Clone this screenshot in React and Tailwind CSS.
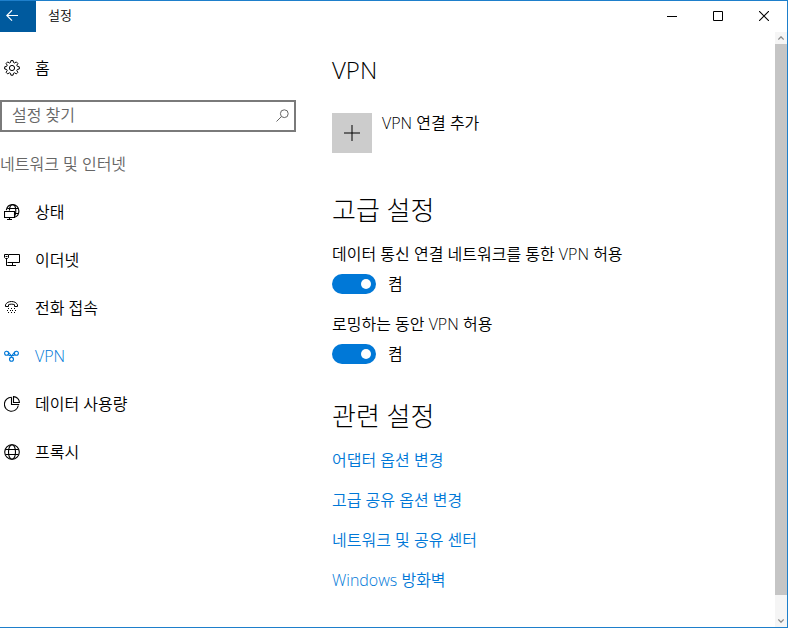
import { useState } from 'react'

function GearIcon() {
  return (
    <svg width="16" height="16" viewBox="0 0 16 16" fill="none" stroke="currentColor" strokeWidth="1" aria-hidden="true">
      <circle cx="8" cy="8" r="2.6" />
      <path d="M6.9 .6h2.2l.4 1.9 1.1.5 1.7-1.1 1.6 1.6-1.1 1.7.5 1.1 2 .5v2.2l-2 .5-.5 1.1 1.1 1.7-1.6 1.6-1.7-1.1-1.1.5-.4 1.9H6.9l-.4-1.9-1.1-.5-1.7 1.1-1.6-1.6 1.1-1.7-.5-1.1-2-.5V6.8l2-.5.5-1.1L2.1 3.5l1.6-1.6 1.7 1.1 1.1-.5z" />
    </svg>
  )
}

function StatusIcon() {
  return (
    <svg width="16" height="16" viewBox="0 0 16 16" fill="none" stroke="currentColor" strokeWidth="1.1" aria-hidden="true">
      <path d="M2.3 6.2C2.9 2.800 5.500.6 8.600.6c3.600 0 6.300 2.900 6.300 6.400 0 3.200-1.800 5.500-4.400 6.300" />
      <path d="M5.400 6.500c.2-3.400 1.400-5.900 3.200-5.900 2 0 3.200 2.900 3.200 6.400 0 2-.4 4-1.300 5.500M3.200 4.500h11M10.500 9.500h4" />
      <path d="M.5 7.500h10v6H.5zM5.500 13.500v2M3 15.500h5" />
    </svg>
  )
}

function EthernetIcon() {
  return (
    <svg width="16" height="16" viewBox="0 0 16 16" fill="none" stroke="currentColor" strokeWidth="1" aria-hidden="true">
      <path d="M5 2.5h10.500v8H3.500M8.500 10.500v3M5 13.500h7M2.500 7v6.500H5" />
      <path d="M.5 2.500h4v3l-1 1h-2l-1-1zM1.500 4.500h2" />
    </svg>
  )
}

function DialUpIcon() {
  return (
    <svg width="16" height="16" viewBox="0 0 16 16" fill="none" stroke="currentColor" strokeWidth="1" aria-hidden="true">
      <path d="M1.500 6.500V4.800C2.500 2.600 4.800 1.500 7.500 1.500s5 1.100 6 3.300v1.700h-3V4.700c-1.600-.7-4.400-.7-6 0v1.800z" />
      <path d="M4 8.500h1M7 8.500h1M10 8.500h1M3 10.500h1M6 10.500h1M8 10.500h1M11 10.500h1M4 12.500h1M7 12.500h1M10 12.500h1" />
    </svg>
  )
}

function VpnIcon() {
  return (
    <svg width="16" height="16" viewBox="0 0 16 16" fill="none" stroke="currentColor" strokeWidth="1.1" aria-hidden="true">
      <circle cx="2.600" cy="5.200" r="2" />
      <circle cx="12.400" cy="5.200" r="2" />
      <circle cx="7.500" cy="11.300" r="2" />
      <path d="M2.600 3.200C5.600 3.200 6.200 8 9.200 10.300M12.400 3.200C9.400 3.200 8.800 8 5.800 10.300" />
      <path d="M4 6.700c.9.900 2 1.100 2.900.8M11 6.700c-.9.900-2 1.100-2.900.8" />
    </svg>
  )
}

function DataUsageIcon() {
  return (
    <svg width="16" height="16" viewBox="0 0 16 16" fill="none" stroke="currentColor" strokeWidth="1.1" aria-hidden="true">
      <path d="M7.500 1.300A7 7 0 1 0 14.300 9.500" />
      <path d="M7.500 1.300v7.200h3.500" />
      <path d="M9.500.600v5.900h5.900C15.400 3.200 12.800.600 9.500.600zM11 8.500h4.200" />
    </svg>
  )
}

function ProxyIcon() {
  return (
    <svg width="16" height="16" viewBox="0 0 16 16" fill="none" stroke="currentColor" strokeWidth="1.1" aria-hidden="true">
      <circle cx="8" cy="8" r="7.300" />
      <ellipse cx="8" cy="8" rx="3.500" ry="7.300" />
      <path d="M1.500 5.500h13M1.500 10.500h13" />
    </svg>
  )
}

const navItems = [
  { id: 'status', label: '상태', icon: StatusIcon },
  { id: 'ethernet', label: '이더넷', icon: EthernetIcon },
  { id: 'dialup', label: '전화 접속', icon: DialUpIcon },
  { id: 'vpn', label: 'VPN', icon: VpnIcon },
  { id: 'data', label: '데이터 사용량', icon: DataUsageIcon },
  { id: 'proxy', label: '프록시', icon: ProxyIcon },
]

const relatedLinks = ['어댑터 옵션 변경', '고급 공유 옵션 변경', '네트워크 및 공유 센터', 'Windows 방화벽']

function TitleBar() {
  return (
    <header className="flex h-[31px] items-start">
      <button type="button" aria-label="뒤로" className="flex h-full w-9 items-center bg-[#005a9e] pb-px pl-1.5 text-white">
        <svg width="12" height="12" viewBox="0 0 12 12" fill="none" stroke="currentColor" strokeWidth="1.2" aria-hidden="true">
          <path d="M12 5.500H.8M6 .3L.8 5.500 6 10.700" />
        </svg>
      </button>
      <span className="flex-1 pt-1 pl-3 text-[13px] leading-5">설정</span>
      <button type="button" aria-label="최소화" className="flex h-[30px] w-[46px] items-center justify-center">
        <svg width="10" height="10" viewBox="0 0 10 10" stroke="currentColor" aria-hidden="true">
          <path d="M0 5.500h10" />
        </svg>
      </button>
      <button type="button" aria-label="최대화" className="flex h-[30px] w-[46px] items-center justify-center">
        <svg width="10" height="10" viewBox="0 0 10 10" fill="none" stroke="currentColor" aria-hidden="true">
          <path d="M.5.5h9v9h-9z" />
        </svg>
      </button>
      <button type="button" aria-label="닫기" className="flex h-[30px] w-[46px] items-center justify-center">
        <svg width="10" height="10" viewBox="0 0 10 10" stroke="currentColor" strokeWidth="1.1" aria-hidden="true">
          <path d="M0 0l10 10M10 0L0 10" />
        </svg>
      </button>
    </header>
  )
}

function NavRow({ label, icon: Icon, active, onClick }) {
  return (
    <button
      type="button"
      onClick={onClick}
      className={`flex h-12 w-full items-center gap-[15px] pl-1 text-left ${active ? 'text-[#0078d7]' : 'text-black'}`}
    >
      <Icon />
      <span>{label}</span>
    </button>
  )
}

function Sidebar({ selected, onSelect }) {
  return (
    <aside className="w-[296px] shrink-0 pt-3">
      <NavRow label="홈" icon={GearIcon} onClick={() => onSelect('vpn')} />
      <div className="mt-2 flex h-8 items-center border-2 border-[#7a7a7a] pr-[5px] pb-0.5 pl-2.5 text-[#666]">
        <input
          type="text"
          aria-label="설정 찾기"
          placeholder="설정 찾기"
          className="min-w-0 flex-1 bg-transparent placeholder:text-[#666] focus:outline-none"
        />
        <svg width="13" height="13" viewBox="0 0 13 13" fill="none" stroke="currentColor" aria-hidden="true">
          <circle cx="8.300" cy="4.700" r="3.900" />
          <path d="M5.500 7.500L.5 12.500" />
        </svg>
      </div>
      <h2 className="mt-2 flex h-12 items-center text-[#666]">네트워크 및 인터넷</h2>
      <nav>
        {navItems.map((item) => (
          <NavRow key={item.id} {...item} active={selected === item.id} onClick={() => onSelect(item.id)} />
        ))}
      </nav>
    </aside>
  )
}

function Toggle({ id, label }) {
  const [on, setOn] = useState(true)

  return (
    <div className="flex flex-col gap-2.5">
      <label htmlFor={id}>{label}</label>
      <div className="flex items-center gap-3">
        <input
          id={id}
          type="checkbox"
          role="switch"
          checked={on}
          onChange={(e) => setOn(e.target.checked)}
          className="flex h-5 w-11 appearance-none items-center rounded-full bg-[#999] px-[5px] before:size-2.5 before:rounded-full before:bg-white checked:justify-end checked:bg-[#0078d7]"
        />
        <span>{on ? '켬' : '끔'}</span>
      </div>
    </div>
  )
}

function ScrollBar() {
  return (
    <div className="flex w-3 shrink-0 flex-col bg-[#f5f5f5] text-[#8a8a8a]" aria-hidden="true">
      <div className="flex h-3 items-center justify-center">
        <svg width="6" height="4" viewBox="0 0 6 4" fill="none" stroke="currentColor" strokeWidth="1.3">
          <path d="M.3 3.500L3 .8l2.700 2.700" />
        </svg>
      </div>
      <div className="flex-1 bg-[#c5c5c5]" />
      <div className="flex h-8 items-end justify-center pb-1">
        <svg width="6" height="4" viewBox="0 0 6 4" fill="none" stroke="currentColor" strokeWidth="1.3">
          <path d="M.3.500L3 3.200 5.700.500" />
        </svg>
      </div>
    </div>
  )
}

export default function App() {
  const [selected, setSelected] = useState('vpn')

  return (
    <div className="flex min-h-screen flex-col border-t border-r border-b border-[#1e7fcb] bg-white font-['Open_Sans','Noto_Sans_CJK_KR',sans-serif] text-[16px] leading-5 font-[350] text-black">
      <TitleBar />
      <div className="flex flex-1">
        <Sidebar selected={selected} onSelect={setSelected} />
        <main className="min-w-0 flex-1 pt-[22px] pb-8 pl-9">
          <h1 className="text-[24px] leading-8 font-light">VPN</h1>
          <button type="button" className="mt-[27px] flex items-start gap-2.5 text-left">
            <span className="flex size-10 items-center justify-center bg-[#ccc]">
              <svg width="16" height="16" viewBox="0 0 16 16" stroke="currentColor" aria-hidden="true">
                <path d="M8 0v16M0 8h16" />
              </svg>
            </span>
            <span>VPN 연결 추가</span>
          </button>

          <section className="mt-[41px]">
            <h2 className="text-[26px] leading-8 font-light">고급 설정</h2>
            <div className="mt-[18px] flex flex-col gap-5">
              <Toggle id="metered" label="데이터 통신 연결 네트워크를 통한 VPN 허용" />
              <Toggle id="roaming" label="로밍하는 동안 VPN 허용" />
            </div>
          </section>

          <section className="mt-9">
            <h2 className="text-[26px] leading-8 font-light">관련 설정</h2>
            <ul className="mt-[18px] flex flex-col gap-5 text-[#0078d7]">
              {relatedLinks.map((link) => (
                <li key={link}>
                  <a href="#">{link}</a>
                </li>
              ))}
            </ul>
          </section>
        </main>
        <ScrollBar />
      </div>
    </div>
  )
}
